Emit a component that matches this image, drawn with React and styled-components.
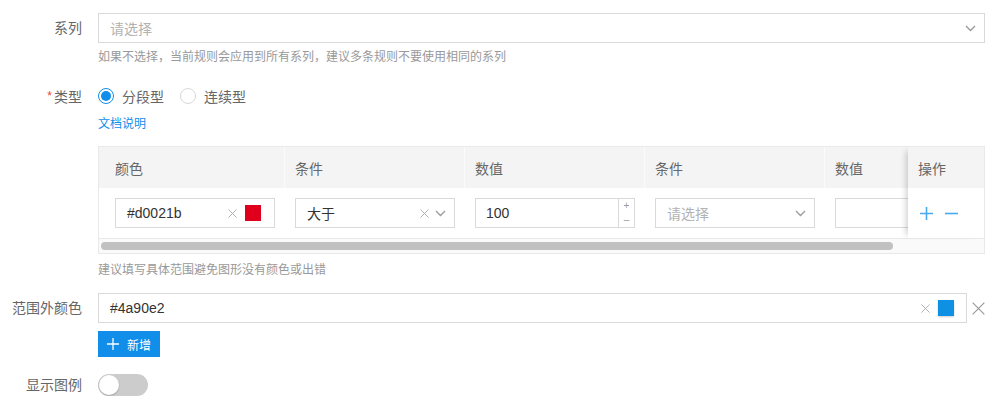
import React from "react";
import styled, { createGlobalStyle } from "styled-components";

const Global = createGlobalStyle`
  html, body { margin: 0; padding: 0; background: #fff; }
  body {
    font-family: "Liberation Sans", "Noto Sans CJK SC", sans-serif;
    font-size: 14px;
    color: #333;
  }
  * { box-sizing: border-box; }
`;

const BLUE = "#108ee9";

const Page = styled.div`
  width: 994px;
  padding: 0 9px 0 0;
`;

const FormItem = styled.div`
  display: flex;
  align-items: flex-start;
  margin-top: ${(p) => p.$top}px;
`;

const Label = styled.div`
  width: 82px;
  flex: none;
  text-align: right;
  line-height: ${(p) => p.$lh || 30}px;
  color: #666;
  font-size: 14px;
  white-space: nowrap;
`;

const Required = styled.span`
  color: #f04134;
  font-size: 12px;
  margin-right: 2px;
  vertical-align: 2px;
`;

const Control = styled.div`
  flex: 1;
  min-width: 0;
  margin-left: 16px;
`;

const SelectBox = styled.div`
  position: relative;
  height: 30px;
  width: ${(p) => (p.$width ? `${p.$width}px` : "100%")};
  border: 1px solid #d9d9d9;
  background: #fff;
  display: flex;
  align-items: center;
  padding: 0 8px 0 11px;
  gap: 6px;
`;

const SelectText = styled.span`
  flex: 1;
  font-size: 14px;
  color: ${(p) => (p.$placeholder ? "#b2b2b2" : "#333")};
  white-space: nowrap;
  overflow: hidden;
`;

const Help = styled.div`
  font-size: 12px;
  line-height: 18px;
  color: #999;
  margin-top: ${(p) => p.$top || 0}px;
`;

const RadioGroup = styled.div`
  display: flex;
  align-items: center;
  height: 30px;
  gap: 16px;
`;

const RadioItem = styled.label`
  display: flex;
  align-items: center;
  gap: 8px;
  color: #666;
  font-size: 14px;
`;

const RadioCircle = styled.span`
  width: 16px;
  height: 16px;
  border-radius: 50%;
  border: 1px solid ${(p) => (p.$checked ? BLUE : "#d9d9d9")};
  background: #fff;
  display: flex;
  align-items: center;
  justify-content: center;
  &::after {
    content: "";
    width: 10px;
    height: 10px;
    border-radius: 50%;
    background: ${(p) => (p.$checked ? BLUE : "transparent")};
  }
`;

const Link = styled.a`
  display: block;
  font-size: 12px;
  line-height: 18px;
  color: ${BLUE};
  margin-top: 4px;
  text-decoration: none;
`;

const TableWrap = styled.div`
  position: relative;
  margin-top: 13px;
  border: 1px solid #e9e9e9;
  overflow: hidden;
`;

const ScrollArea = styled.div`
  overflow: hidden;
`;

const Grid = styled.div`
  display: grid;
  grid-template-columns: 186px 180px 180px 180px 180px 76px;
  width: max-content;
`;

const HeadCell = styled.div`
  height: 41px;
  background: #f4f4f4;
  border-right: 1px solid #fbfbfb;
  display: flex;
  align-items: center;
  padding-left: ${(p) => p.$pl || 10}px;
  color: #666;
  font-size: 14px;
`;

const BodyCell = styled.div`
  height: 51px;
  border-bottom: 1px solid #e9e9e9;
  display: flex;
  align-items: center;
  padding-left: ${(p) => p.$pl || 10}px;
  background: #fff;
`;

const FixedCol = styled.div`
  position: absolute;
  top: 0;
  right: 0;
  width: 76px;
  box-shadow: -6px 0 6px -4px rgba(0, 0, 0, 0.18);
  background: #fff;
`;

const FixedHead = styled.div`
  height: 41px;
  background: #f4f4f4;
  display: flex;
  align-items: center;
  padding-left: 10px;
  color: #666;
`;

const FixedBody = styled.div`
  height: 51px;
  border-bottom: 1px solid #e9e9e9;
  display: flex;
  align-items: center;
  padding-left: 12px;
  gap: 12px;
`;

const ScrollTrack = styled.div`
  height: 14px;
  background: #fafafa;
  padding: 3px 2px 3px 2px;
`;

const ScrollThumb = styled.div`
  height: 8px;
  width: 792px;
  border-radius: 4px;
  background: #c1c1c1;
`;

const InputBox = styled.div`
  height: 30px;
  width: ${(p) => (p.$width ? `${p.$width}px` : "auto")};
  border: 1px solid #d9d9d9;
  display: flex;
  align-items: center;
  padding: 0 ${(p) => p.$pr ?? 12}px 0 ${(p) => p.$pl ?? 11}px;
  gap: 8px;
  background: #fff;
  flex: ${(p) => (p.$width ? "none" : "1")};
  min-width: 0;
`;

const InputText = styled.span`
  flex: 1;
  font-size: 14px;
  color: #333;
`;

const Swatch = styled.span`
  width: 16px;
  height: 16px;
  background: ${(p) => p.$color};
  box-shadow: ${(p) => (p.$shadow ? "0 1px 2px rgba(0,0,0,0.2)" : "none")};
  flex: none;
`;

const NumberHandler = styled.div`
  width: 16px;
  height: 100%;
  border-left: 1px solid #d9d9d9;
  display: flex;
  flex-direction: column;
  align-items: center;
  justify-content: space-around;
  color: #999;
  font-size: 10px;
  line-height: 1;
`;

const Row = styled.div`
  display: flex;
  align-items: center;
  gap: 5px;
`;

const Button = styled.button`
  margin-top: 8px;
  height: 26px;
  width: 62px;
  border: none;
  background: ${BLUE};
  color: #fff;
  display: flex;
  align-items: center;
  justify-content: center;
  gap: 8px;
  font-size: 12px;
  font-family: inherit;
  padding: 0;
  cursor: pointer;
`;

const Switch = styled.span`
  display: block;
  position: relative;
  width: 50px;
  height: 22px;
  border-radius: 11px;
  background: #cccccc;
  &::after {
    content: "";
    position: absolute;
    left: 1px;
    top: 1px;
    width: 20px;
    height: 20px;
    border-radius: 50%;
    background: #fff;
    box-shadow: 0 1px 2px rgba(0, 0, 0, 0.2);
  }
`;

const Chevron = ({ color = "#999" }) => (
  <svg width="11" height="7" viewBox="0 0 11 7" fill="none">
    <path d="M1 1l4.5 4.5L10 1" stroke={color} strokeWidth="1.3" />
  </svg>
);

const Clear = ({ size = 9, color = "#aaa", w = 1 }) => (
  <svg width={size} height={size} viewBox="0 0 10 10" fill="none" style={{ flex: "none" }}>
    <path d="M0.5 0.5l9 9M9.5 0.5l-9 9" stroke={color} strokeWidth={w} />
  </svg>
);

const Plus = ({ size = 13, color = "#49a9ee", w = 1.6 }) => (
  <svg width={size} height={size} viewBox="0 0 13 13" fill="none">
    <path d="M6.5 0v13M0 6.5h13" stroke={color} strokeWidth={w} />
  </svg>
);

const Minus = ({ color = "#49a9ee" }) => (
  <svg width="13" height="13" viewBox="0 0 13 13" fill="none">
    <path d="M0 6.5h13" stroke={color} strokeWidth="1.6" />
  </svg>
);

export default function App() {
  return (
    <Page>
      <Global />
      <FormItem $top={13}>
        <Label>系列</Label>
        <Control>
          <SelectBox>
            <SelectText $placeholder>请选择</SelectText>
            <Chevron />
          </SelectBox>
          <Help $top={5}>如果不选择，当前规则会应用到所有系列，建议多条规则不要使用相同的系列</Help>
        </Control>
      </FormItem>

      <FormItem $top={15}>
        <Label>
          <Required>*</Required>类型
        </Label>
        <Control>
          <RadioGroup>
            <RadioItem>
              <RadioCircle $checked />
              分段型
            </RadioItem>
            <RadioItem>
              <RadioCircle />
              连续型
            </RadioItem>
          </RadioGroup>
          <Link>文档说明</Link>
          <TableWrap>
            <ScrollArea>
              <Grid>
                <HeadCell $pl={16}>颜色</HeadCell>
                <HeadCell>条件</HeadCell>
                <HeadCell>数值</HeadCell>
                <HeadCell>条件</HeadCell>
                <HeadCell>数值</HeadCell>
                <HeadCell />
                <BodyCell $pl={16}>
                  <InputBox $width={160} $pr={13}>
                    <InputText>#d0021b</InputText>
                    <Clear />
                    <Swatch $color="#e0001b" />
                  </InputBox>
                </BodyCell>
                <BodyCell>
                  <SelectBox $width={160}>
                    <SelectText>大于</SelectText>
                    <Clear />
                    <Chevron />
                  </SelectBox>
                </BodyCell>
                <BodyCell>
                  <InputBox $width={160} $pr={0} $pl={10}>
                    <InputText>100</InputText>
                    <NumberHandler>
                      <span>+</span>
                      <span>–</span>
                    </NumberHandler>
                  </InputBox>
                </BodyCell>
                <BodyCell>
                  <SelectBox $width={160}>
                    <SelectText $placeholder>请选择</SelectText>
                    <Chevron />
                  </SelectBox>
                </BodyCell>
                <BodyCell>
                  <InputBox $width={160} />
                </BodyCell>
                <BodyCell />
              </Grid>
            </ScrollArea>
            <ScrollTrack>
              <ScrollThumb />
            </ScrollTrack>
            <FixedCol>
              <FixedHead>操作</FixedHead>
              <FixedBody>
                <Plus />
                <Minus />
              </FixedBody>
            </FixedCol>
          </TableWrap>
          <Help $top={7}>建议填写具体范围避免图形没有颜色或出错</Help>
        </Control>
      </FormItem>

      <FormItem $top={14}>
        <Label>范围外颜色</Label>
        <Control>
          <Row>
            <InputBox $pr={12}>
              <InputText>#4a90e2</InputText>
              <Clear />
              <Swatch $color="#0e91e3" $shadow />
            </InputBox>
            <Clear size={13} color="#999" w={0.9} />
          </Row>
          <Button>
            <Plus size={12} color="#fff" w={1.4} />
            新增
          </Button>
        </Control>
      </FormItem>

      <FormItem $top={17}>
        <Label $lh={22}>显示图例</Label>
        <Control>
          <Switch />
        </Control>
      </FormItem>
    </Page>
  );
}
